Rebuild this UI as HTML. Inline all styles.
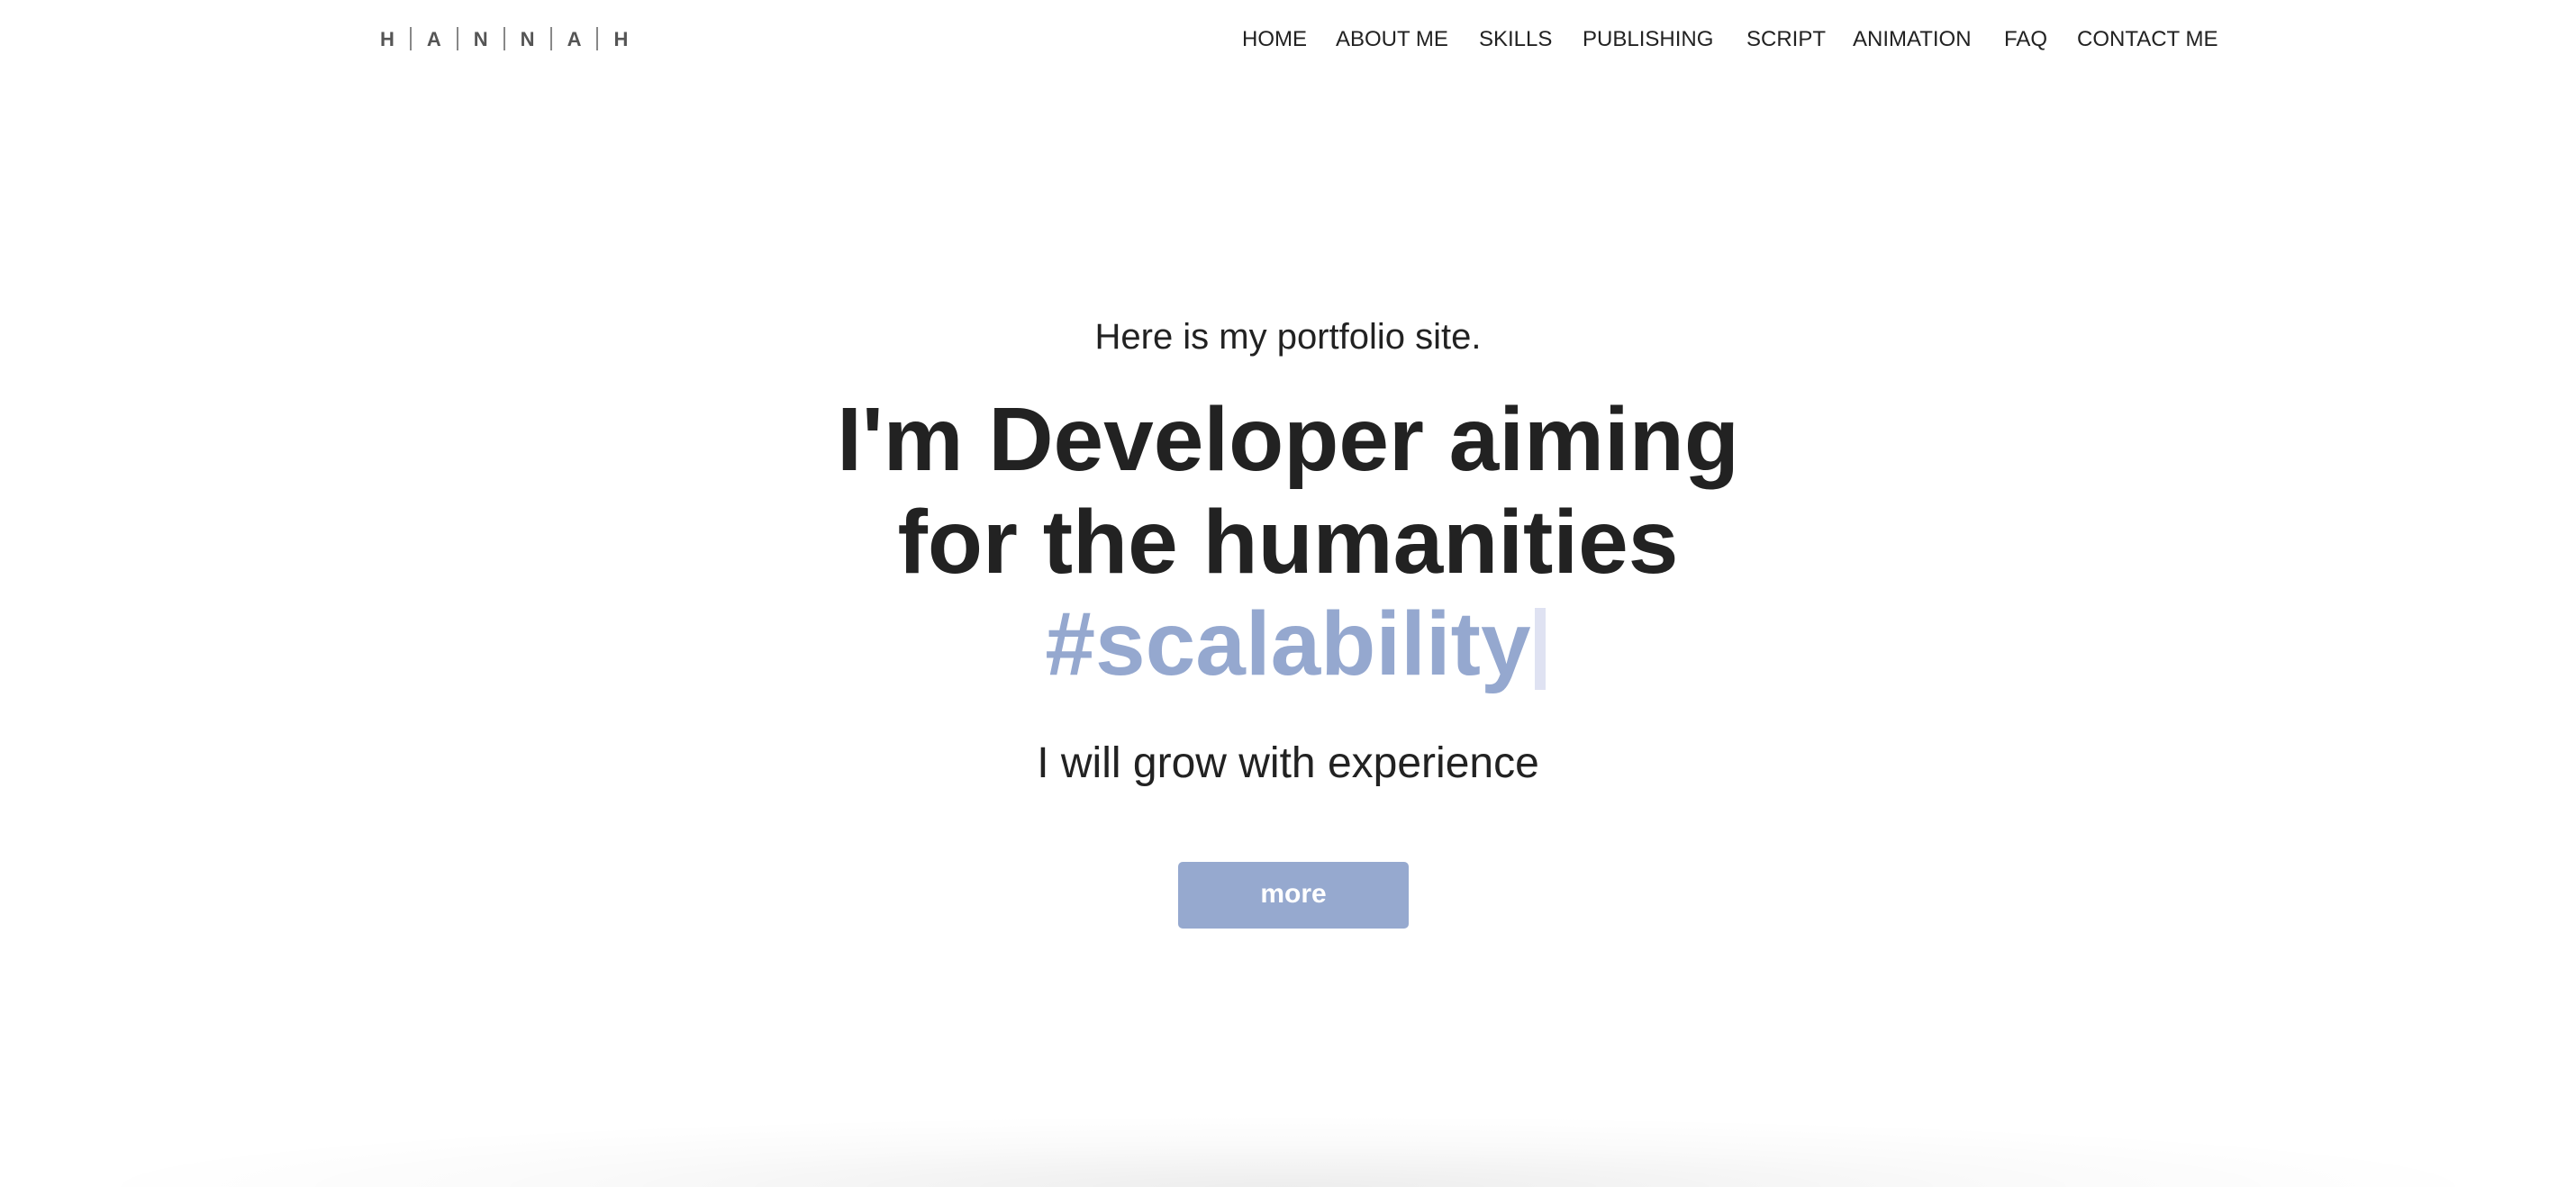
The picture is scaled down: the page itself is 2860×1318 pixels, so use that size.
<!DOCTYPE html>
<html><head><meta charset="utf-8"><style>
html,body{margin:0;padding:0;width:2860px;height:1318px;overflow:hidden;background:#fff;font-family:"Liberation Sans",sans-serif;}
#wrap{position:relative;width:2860px;height:1318px;overflow:hidden;}
.abs{position:absolute;}
.logo{left:422px;top:31px;font-size:22px;font-weight:bold;color:#555;white-space:nowrap;}
.logo span{display:inline-block;}
.sep{display:inline-block;width:2px;height:26px;background:#888;vertical-align:middle;margin:0 17px;position:relative;top:-2px;}
.nav{top:29px;font-size:24px;color:#222;line-height:30px;white-space:nowrap;}
.c{left:0;width:2860px;text-align:center;line-height:1;white-space:nowrap;}
.h{font-size:100px;font-weight:bold;color:#222;}
.btn{left:1308px;top:957px;width:256px;height:74px;background:#96a9cf;border-radius:5px;color:#fff;font-size:30px;font-weight:bold;text-align:center;line-height:72px;}
.shadow{left:0;width:2860px;top:1238px;height:80px;background:radial-gradient(ellipse 1350px 80px at 50% 100%, rgba(0,0,0,0.07), rgba(0,0,0,0.02) 60%, rgba(0,0,0,0) 100%);}
</style></head><body><div id="wrap">
<div class="abs logo"><span>H</span><i class="sep"></i><span>A</span><i class="sep"></i><span>N</span><i class="sep"></i><span>N</span><i class="sep"></i><span>A</span><i class="sep"></i><span>H</span></div>
<div class="abs nav" style="left:1379px">HOME</div>
<div class="abs nav" style="left:1483px">ABOUT ME</div>
<div class="abs nav" style="left:1642px">SKILLS</div>
<div class="abs nav" style="left:1757px">PUBLISHING</div>
<div class="abs nav" style="left:1939px">SCRIPT</div>
<div class="abs nav" style="left:2057px">ANIMATION</div>
<div class="abs nav" style="left:2225px">FAQ</div>
<div class="abs nav" style="left:2306px">CONTACT ME</div>

<div class="abs c" style="top:354px;font-size:40px;color:#222;">Here is my portfolio site.</div>
<div class="abs c h" style="top:438px;">I'm Developer aiming</div>
<div class="abs c h" style="top:552px;">for the humanities</div>
<div class="abs c h" style="top:665px;color:#95a8cf;">#scalability</div>
<div class="abs" style="left:1704px;top:675px;width:12px;height:91px;background:#dfe2f2;"></div>
<div class="abs c" style="top:824px;font-size:48px;color:#222;">I will grow with experience</div>
<div class="abs btn">more</div>
<div class="abs shadow"></div>
</div></body></html>
